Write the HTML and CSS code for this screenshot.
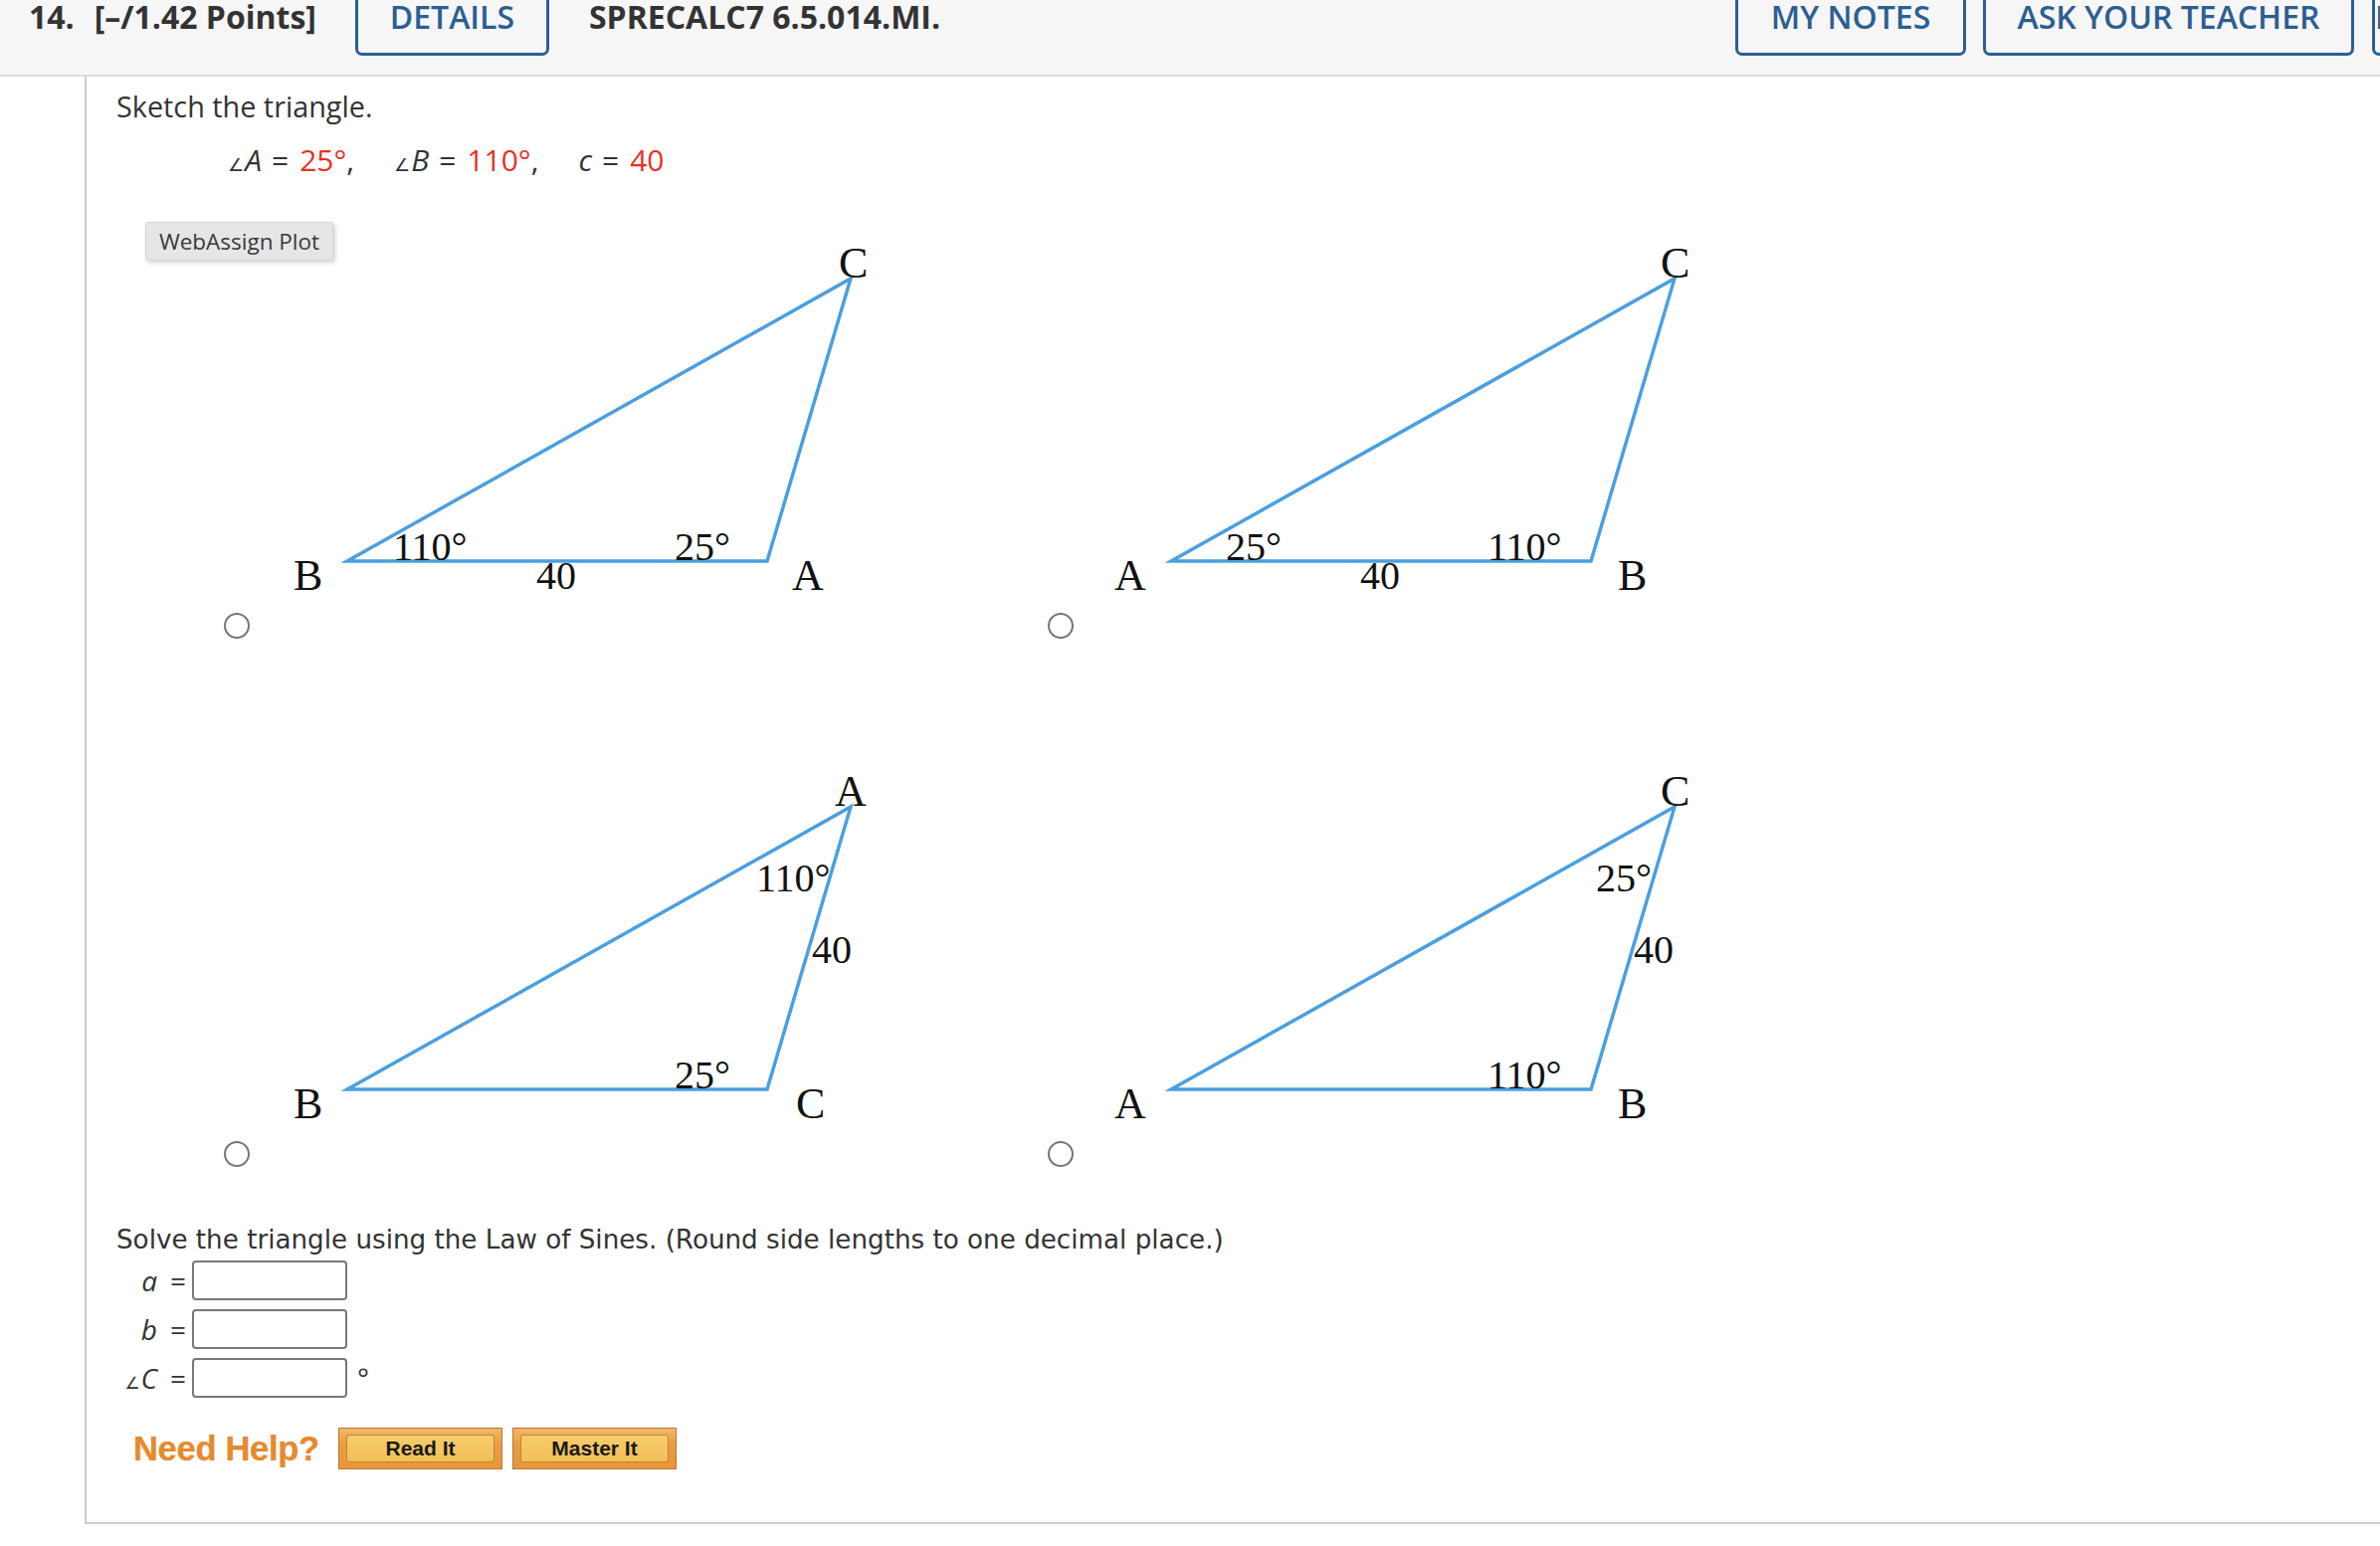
FILE: index.html
```html
<!DOCTYPE html>
<html lang="en">
<head>
<meta charset="utf-8">
<title>Question 14</title>
<link rel="stylesheet" href="styles.css">
</head>
<body>
<header class="qhead">
  <div class="qnum">14.</div>
  <div class="qpts">[–/1.42 Points]</div>
  <div class="hbtn hbtn-details">DETAILS</div>
  <div class="qid">SPRECALC7 6.5.014.MI.</div>
  <div class="hright">
    <div class="hbtn hbtn-notes">MY NOTES</div>
    <div class="hbtn hbtn-ask">ASK YOUR TEACHER</div>
    <div class="hbtn hbtn-cut">PRACTICE ANOTHER</div>
  </div>
</header>

<main class="qbody">
  <p class="prompt">Sketch the triangle.</p>
  <p class="given"><span class="ang">∠</span><i>A</i><span class="op">=</span><span class="val">25°</span>,<span class="sp"></span><span class="ang">∠</span><i>B</i><span class="op">=</span><span class="val">110°</span>,<span class="sp"></span><i>c</i><span class="op">=</span><span class="val">40</span></p>

  <div class="plots">
    <div class="plot-tag">WebAssign Plot</div>

    <div class="choice">
      <svg class="tri" width="828" height="388" viewBox="0 0 828 388">
        <polygon points="204,341 626,341 710,57" />
        <text class="lbl" x="150" y="370">B</text>
        <text class="lbl" x="651" y="370">A</text>
        <text class="lbl" x="698" y="56">C</text>
        <text class="num" x="250" y="340">110°</text>
        <text class="num" x="533" y="340">25°</text>
        <text class="num" x="394" y="369">40</text>
      </svg>
      <input type="radio" name="tri" class="radio">
    </div>

    <div class="choice">
      <svg class="tri" width="828" height="388" viewBox="0 0 828 388">
        <polygon points="204,341 626,341 710,57" />
        <text class="lbl" x="147" y="370">A</text>
        <text class="lbl" x="653" y="370">B</text>
        <text class="lbl" x="696" y="56">C</text>
        <text class="num" x="259" y="340">25°</text>
        <text class="num" x="522" y="340">110°</text>
        <text class="num" x="394" y="369">40</text>
      </svg>
      <input type="radio" name="tri" class="radio">
    </div>

    <div class="choice">
      <svg class="tri" width="828" height="388" viewBox="0 0 828 388">
        <polygon points="204,341 626,341 710,57" />
        <text class="lbl" x="694" y="56">A</text>
        <text class="lbl" x="150" y="370">B</text>
        <text class="lbl" x="655" y="370">C</text>
        <text class="num" x="615" y="142">110°</text>
        <text class="num" x="671" y="214">40</text>
        <text class="num" x="533" y="340">25°</text>
      </svg>
      <input type="radio" name="tri" class="radio">
    </div>

    <div class="choice">
      <svg class="tri" width="828" height="388" viewBox="0 0 828 388">
        <polygon points="204,341 626,341 710,57" />
        <text class="lbl" x="696" y="56">C</text>
        <text class="lbl" x="147" y="370">A</text>
        <text class="lbl" x="653" y="370">B</text>
        <text class="num" x="631" y="142">25°</text>
        <text class="num" x="669" y="214">40</text>
        <text class="num" x="522" y="340">110°</text>
      </svg>
      <input type="radio" name="tri" class="radio">
    </div>
  </div>

  <p class="solve">Solve the triangle using the Law of Sines. (Round side lengths to one decimal place.)</p>

  <div class="answers">
    <div class="arow"><span class="alabel"><i>a</i><span class="eq">=</span></span><input class="abox" type="text"></div>
    <div class="arow"><span class="alabel"><i>b</i><span class="eq">=</span></span><input class="abox" type="text"></div>
    <div class="arow"><span class="alabel"><span class="ang">∠</span><i>C</i><span class="eq">=</span></span><input class="abox" type="text"><span class="deg">°</span></div>
  </div>

  <div class="help">
    <span class="need">Need Help?</span>
    <span class="hb hb-read"><span class="hb-in">Read It</span></span>
    <span class="hb hb-master"><span class="hb-in">Master It</span></span>
  </div>
</main>
</body>
</html>
```

FILE: styles.css
```css
html, body {
  margin: 0;
  padding: 0;
  background: #ffffff;
  overflow-x: hidden;
}

body {
  font-family: "Open Sans", "DejaVu Sans", sans-serif;
  color: #333333;
}

/* ---------- header ---------- */
.qhead {
  display: flex;
  align-items: flex-start;
  height: 75px;
  background: #f6f6f6;
  border-bottom: 2px solid #dddddd;
  overflow: hidden;
  white-space: nowrap;
}

.qnum, .qpts, .qid {
  font-size: 32px;
  font-weight: 700;
  line-height: 31px;
  margin-top: 1px;
  color: #333333;
}

.qnum { margin-left: 29px; }
.qpts { margin-left: 20px; }
.qid  { margin-left: 40px; }

.hbtn {
  box-sizing: border-box;
  margin-top: -10px;
  padding: 11px 0 21px;
  border: 3px solid #2b5f93;
  border-top: 0;
  border-radius: 0 0 7px 7px;
  color: #2b5f93;
  font-size: 32px;
  font-weight: 600;
  line-height: 31px;
  text-align: center;
  flex-shrink: 0;
}

.hbtn-details { width: 195px; margin-left: 39px; }

.hright {
  display: flex;
  margin-left: auto;
  margin-right: -292px;
  flex-shrink: 0;
}

.hbtn-notes { width: 232px; }
.hbtn-ask   { width: 373px; margin-left: 17px; }
.hbtn-cut   { width: 300px; margin-left: 18px; }

/* ---------- question body ---------- */
.qbody {
  margin-left: 85px;
  border-left: 2px solid #cccccc;
  border-bottom: 2px solid #cccccc;
  padding: 11px 0 53px 30px;
}

.prompt {
  margin: 0;
  font-size: 28.8px;
  line-height: 38px;
  color: #333333;
}

.given {
  margin: 16px 0 0 112px;
  font-size: 30px;
  line-height: 38px;
  color: #333333;
  white-space: nowrap;
}

.given i, .alabel i {
  font-style: italic;
}

.ang {
  font-size: 0.6em;
  line-height: 0;
  font-style: normal;
  margin-right: 1px;
}

.op {
  margin: 0 11px 0 10px;
}

.val {
  color: #e8321f;
}

.sp {
  display: inline-block;
  width: 40px;
}

/* ---------- plots ---------- */
.plots {
  position: relative;
  margin: 43px 0 0 28px;
  display: grid;
  grid-template-columns: 828px 828px;
  row-gap: 112px;
}

.plot-tag {
  position: absolute;
  left: 1px;
  top: 0;
  z-index: 2;
  box-sizing: border-box;
  width: 189px;
  height: 39px;
  background: #e6e6e6;
  border: 1px solid #d4d4d4;
  border-radius: 3px;
  box-shadow: 2px 2px 5px rgba(0, 0, 0, 0.18);
  font-size: 22.5px;
  line-height: 37px;
  text-align: center;
  color: #3a3a3a;
}

.choice {
  display: flex;
  flex-direction: column;
}

.tri {
  display: block;
  overflow: visible;
}

.tri polygon {
  fill: none;
  stroke: #4b9fe0;
  stroke-width: 3.5;
  stroke-linejoin: miter;
}

.tri text {
  font-family: "Liberation Serif", "Times New Roman", serif;
  fill: #111111;
}

.tri .lbl { font-size: 44px; }
.tri .num { font-size: 40px; }

.radio {
  -webkit-appearance: none;
  appearance: none;
  box-sizing: border-box;
  width: 26px;
  height: 26px;
  margin: 5px 0 0 80px;
  border: 2px solid #767676;
  border-radius: 50%;
  background: #ffffff;
}

/* ---------- solve ---------- */
.solve {
  margin: 57px 0 0 0;
  font-family: "DejaVu Sans", "Verdana", sans-serif;
  font-size: 26.2px;
  line-height: 32px;
  color: #333333;
  white-space: nowrap;
}

.answers {
  margin-top: 5px;
  display: flex;
  flex-direction: column;
  gap: 9px;
}

.arow {
  display: flex;
  align-items: center;
  height: 40px;
}

.alabel {
  box-sizing: border-box;
  width: 76px;
  padding-right: 6px;
  text-align: right;
  font-size: 28px;
  line-height: 40px;
  color: #333333;
  white-space: nowrap;
}

.eq {
  margin-left: 13px;
}

.abox {
  box-sizing: border-box;
  width: 156px;
  height: 40px;
  margin: 0;
  border: 2px solid #787878;
  border-radius: 4px;
  background: #ffffff;
}

.deg {
  margin-left: 10px;
  font-size: 28px;
  line-height: 40px;
  align-self: flex-start;
  color: #333333;
}

/* ---------- help ---------- */
.help {
  display: flex;
  align-items: center;
  margin-top: 30px;
  height: 42px;
}

.need {
  box-sizing: border-box;
  width: 203px;
  padding-left: 17px;
  font-family: "Liberation Sans", Arial, sans-serif;
  font-size: 34.5px;
  font-weight: 700;
  color: #e58a2f;
  text-shadow: 0 0 1px rgba(229, 138, 47, 0.6);
  letter-spacing: -0.3px;
  white-space: nowrap;
}

.hb {
  box-sizing: border-box;
  display: block;
  width: 165px;
  height: 42px;
  padding: 6px 7px;
  background: linear-gradient(#f3b765 0%, #ea9c42 40%, #e8963a 100%);
  border: 1px solid #b8772e;
}

.hb-read   { margin-left: 20px; }
.hb-master { margin-left: 10px; }

.hb-in {
  box-sizing: border-box;
  display: block;
  height: 100%;
  background: linear-gradient(#f6cd6c, #f2bf58);
  border: 1px solid #c08636;
  border-radius: 3px;
  font-family: "Liberation Sans", Arial, sans-serif;
  font-size: 21px;
  font-weight: 700;
  line-height: 26px;
  text-align: center;
  color: #1a1a1a;
}
```
